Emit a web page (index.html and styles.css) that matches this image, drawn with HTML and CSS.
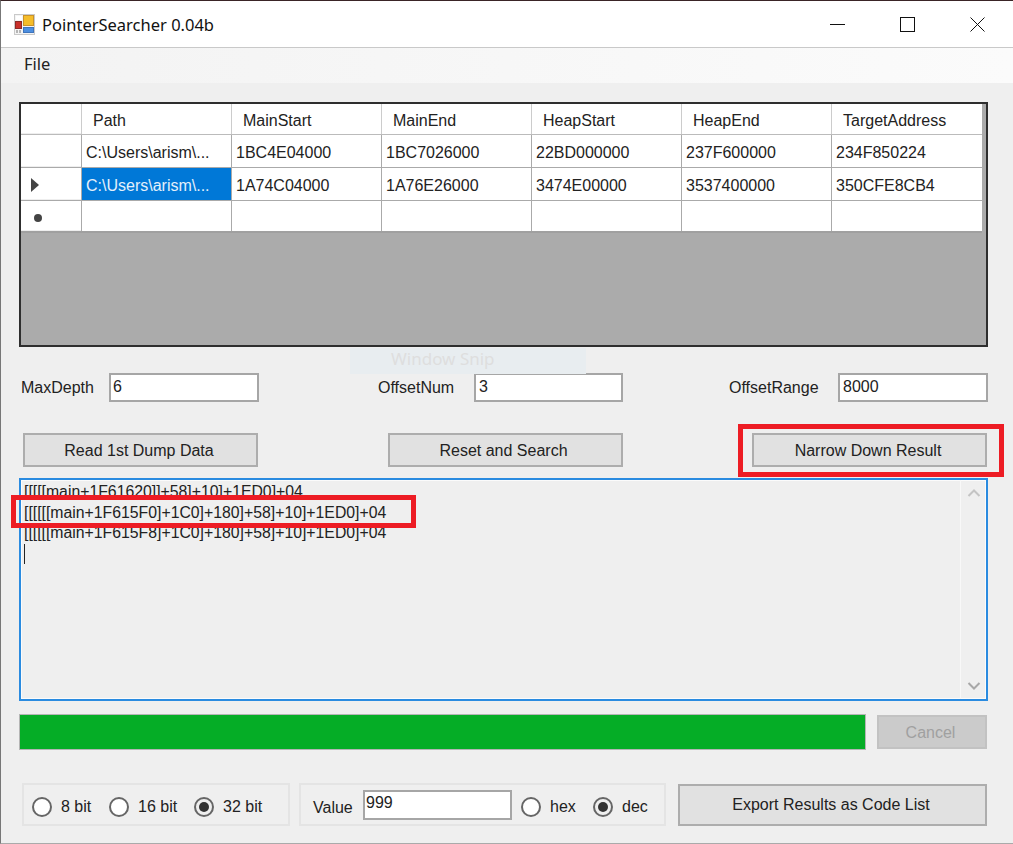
FILE: index.html
```html
<!DOCTYPE html>
<html lang="en">
<head>
    <meta charset="UTF-8">
    <title>PointerSearcher 0.04b</title>
    <link rel="stylesheet" href="styles.css">
</head>
<body>
    <div class="window">
        <div class="titlebar">
            <svg class="app-icon" width="21" height="21" viewBox="0 0 21 21">
                <rect x="0" y="0" width="21" height="21" fill="#c9c9c9"/>
                <rect x="1" y="1" width="19" height="19" fill="#f4f4f4"/>
                <rect x="2" y="2" width="6" height="4" fill="#fff"/>
                <rect x="9.5" y="1.5" width="10" height="10" fill="#f5bd2a" stroke="#c9922a"/>
                <rect x="1.5" y="7.5" width="6" height="7" fill="#c9302a" stroke="#8c2a26"/>
                <rect x="9.5" y="13.5" width="10" height="5" fill="#4d8fe0" stroke="#3f74bb"/>
                <rect x="2" y="16" width="2" height="3" fill="#b5b5b5"/>
                <rect x="5" y="16" width="2" height="3" fill="#b5b5b5"/>
            </svg>
            <div class="title">PointerSearcher 0.04b</div>
            <div class="caption-buttons">
                <svg class="caption" width="15" height="15" viewBox="0 0 15 15"><path d="M0 7.5H15" stroke="#111" fill="none"/></svg>
                <svg class="caption" width="15" height="15" viewBox="0 0 15 15"><rect x="0.5" y="0.5" width="14" height="14" stroke="#111" fill="none"/></svg>
                <svg class="caption" width="15" height="15" viewBox="0 0 15 15"><path d="M0.5 0.5L14.5 14.5M14.5 0.5L0.5 14.5" stroke="#111" fill="none"/></svg>
            </div>
        </div>
        <div class="menubar"><span class="menu-item">File</span></div>

        <div class="main">
            <div class="grid">
                <div class="grid-rows">
                    <div class="row row-header">
                        <div class="row-head"></div>
                        <div class="cell head">Path</div>
                        <div class="cell head">MainStart</div>
                        <div class="cell head">MainEnd</div>
                        <div class="cell head">HeapStart</div>
                        <div class="cell head">HeapEnd</div>
                        <div class="cell head">TargetAddress</div>
                    </div>
                    <div class="row">
                        <div class="row-head"></div>
                        <div class="cell">C:\Users\arism\...</div>
                        <div class="cell">1BC4E04000</div>
                        <div class="cell">1BC7026000</div>
                        <div class="cell">22BD000000</div>
                        <div class="cell">237F600000</div>
                        <div class="cell">234F850224</div>
                    </div>
                    <div class="row">
                        <div class="row-head"><span class="arrow"></span></div>
                        <div class="cell selected">C:\Users\arism\...</div>
                        <div class="cell">1A74C04000</div>
                        <div class="cell">1A76E26000</div>
                        <div class="cell">3474E00000</div>
                        <div class="cell">3537400000</div>
                        <div class="cell">350CFE8CB4</div>
                    </div>
                    <div class="row row-new">
                        <div class="row-head"><span class="star"></span></div>
                        <div class="cell"></div>
                        <div class="cell"></div>
                        <div class="cell"></div>
                        <div class="cell"></div>
                        <div class="cell"></div>
                        <div class="cell"></div>
                    </div>
                </div>
            </div>

            <div class="params">
                <div class="field field-depth"><label>MaxDepth</label><div class="input">6</div></div>
                <div class="field field-num"><label>OffsetNum</label><div class="input">3</div></div>
                <div class="field field-range"><label>OffsetRange</label><div class="input">8000</div></div>
            </div>

            <div class="actions">
                <div class="button">Read 1st Dump Data</div>
                <div class="button">Reset and Search</div>
                <div class="button">Narrow Down Result</div>
            </div>

            <div class="results">
                <div class="results-text">
                    <div>[[[[[main+1F61620]]+58]+10]+1ED0]+04</div>
                    <div>[[[[[[main+1F615F0]+1C0]+180]+58]+10]+1ED0]+04</div>
                    <div>[[[[[[main+1F615F8]+1C0]+180]+58]+10]+1ED0]+04</div>
                    <div class="caret"></div>
                </div>
                <div class="scrollbar">
                    <svg width="14" height="8" viewBox="0 0 14 8"><path d="M1.5 7L7 1.5L12.5 7" stroke="#c4c4c4" stroke-width="2" fill="none"/></svg>
                    <svg width="14" height="8" viewBox="0 0 14 8"><path d="M1.5 1L7 6.5L12.5 1" stroke="#a8a8a8" stroke-width="2" fill="none"/></svg>
                </div>
            </div>

            <div class="progress-row">
                <div class="progress"></div>
                <div class="button button-disabled">Cancel</div>
            </div>

            <div class="bottom-row">
                <div class="group group-bits">
                    <div class="radio-item item-8"><span class="radio"></span>8 bit</div>
                    <div class="radio-item item-16"><span class="radio"></span>16 bit</div>
                    <div class="radio-item"><span class="radio checked"></span>32 bit</div>
                </div>
                <div class="group group-value">
                    <label>Value</label>
                    <div class="input input-value">999</div>
                    <div class="radio-item item-hex"><span class="radio"></span>hex</div>
                    <div class="radio-item"><span class="radio checked"></span>dec</div>
                </div>
                <div class="button button-export">Export Results as Code List</div>
            </div>
        </div>

        <div class="snip-ghost">Window Snip</div>
        <div class="mark mark-button"></div>
        <div class="mark mark-line"></div>
    </div>
</body>
</html>
```

FILE: styles.css
```css
html, body {
    margin: 0;
    height: 100%;
}
body {
    font-family: "Liberation Sans", Arial, sans-serif;
    font-size: 16px;
    color: #222;
    background-color: #efefef;
    overflow: hidden;
}
.window {
    position: relative;
    width: 1013px;
    height: 844px;
    box-sizing: border-box;
    border-top: 1px solid #3a2426;
    border-left: 1px solid #777;
    border-bottom: 1px solid #aaa;
    background-color: #efefef;
}

/* title bar and menu */
.titlebar {
    display: flex;
    align-items: center;
    height: 46px;
    padding-left: 13px;
    background-color: #fff;
    border-bottom: 1px solid #c9c9c9;
}
.app-icon {
    margin-right: 7px;
}
.title {
    font-family: "Noto Sans", sans-serif;
    font-size: 16.5px;
    color: #111;
}
.caption-buttons {
    display: flex;
    margin-left: auto;
    margin-right: 28px;
    gap: 55px;
}
.menubar {
    display: flex;
    align-items: center;
    box-sizing: border-box;
    height: 35px;
    padding: 0 0 4px 23px;
    background: linear-gradient(to right, #f3f3f3, #fbfbfb);
}
.menu-item {
    font-family: "Noto Sans", sans-serif;
    font-size: 16.5px;
    color: #222;
}

/* main form */
.main {
    padding: 19px 0 0 18px;
    width: 969px;
}
.grid {
    box-sizing: border-box;
    height: 245px;
    border: 2px solid #2e2e2e;
    background-color: #ababab;
}
.grid-rows {
    width: 961px;
}
.row {
    display: grid;
    grid-template-columns: 60px repeat(6, 150px);
    height: 33px;
    background-color: #fff;
    border-bottom: 1px solid #aaa;
    box-sizing: border-box;
}
.row-header {
    height: 31px;
    border-bottom: 1px solid #bbb;
}
.row-new {
    height: 32px;
    border-bottom: 2px solid #a0a0a0;
}
.row-head {
    display: flex;
    align-items: center;
    background-color: #fff;
    border-bottom: 1px solid #eee;
}
.cell {
    box-sizing: border-box;
    display: flex;
    align-items: center;
    padding: 3px 0 0 4px;
    border-left: 1px solid #aaa;
    white-space: nowrap;
    overflow: hidden;
}
.head {
    padding-left: 11px;
    border-left-color: #ccc;
}
.selected {
    background-color: #0078d7;
    color: #e4f0fb;
}
.arrow {
    width: 0;
    height: 0;
    margin: 2px 0 0 10px;
    border-left: 8px solid #444;
    border-top: 7px solid transparent;
    border-bottom: 7px solid transparent;
}
.star {
    width: 8px;
    height: 8px;
    margin: 4px 0 0 13px;
    border-radius: 50%;
    background-color: #444;
}

.params {
    display: flex;
    margin-top: 26px;
    padding-left: 2px;
}
.field {
    display: flex;
    align-items: center;
}
.field-depth label {
    width: 88px;
}
.field-num {
    margin-left: 119px;
}
.field-num label {
    width: 96px;
}
.field-num .input {
    width: 149px;
}
.field-range {
    margin-left: 106px;
}
.field-range label {
    width: 109px;
}
.input {
    box-sizing: border-box;
    width: 150px;
    height: 29px;
    padding: 1px 0 0 2px;
    background-color: #fff;
    border: 2px solid #a6a6a6;
    line-height: 22px;
}
.field-num .input,
.field-range .input {
    padding-left: 3px;
}
.actions {
    display: flex;
    justify-content: space-between;
    margin-top: 31px;
    padding: 0 1px 0 4px;
}
.button {
    box-sizing: border-box;
    display: flex;
    align-items: center;
    justify-content: center;
    width: 235px;
    height: 34px;
    padding: 2px 3px 0 0;
    background-color: #e1e1e1;
    border: 2px solid #adadad;
}
.results {
    box-sizing: border-box;
    display: flex;
    height: 223px;
    margin-top: 11px;
    border: 2px solid #2a8be0;
    box-shadow: inset 0 0 0 1px #fbfbfb;
}
.results-text {
    flex: 1;
    padding: 2px 0 0 3px;
    font-size: 15.8px;
    line-height: 20.5px;
}
.caret {
    width: 1px;
    height: 20px;
    background-color: #222;
}
.scrollbar {
    display: flex;
    flex-direction: column;
    align-items: center;
    justify-content: space-between;
    box-sizing: border-box;
    width: 26px;
    padding: 9px 0;
    border-left: 1px solid #f8f8f8;
}
.progress-row {
    display: flex;
    align-items: center;
    justify-content: space-between;
    height: 36px;
    margin-top: 13px;
    padding-right: 1px;
}
.progress {
    box-sizing: border-box;
    width: 847px;
    height: 36px;
    background-color: #05ad26;
    border: 1px solid #b5b5b5;
}
.button-disabled {
    width: 110px;
    background-color: #cbcbcb;
    border-color: #c2c2c2;
    color: #a0a0a0;
}
.bottom-row {
    display: flex;
    height: 43px;
    margin-top: 33px;
    padding-left: 3px;
}
.group {
    box-sizing: border-box;
    display: flex;
    align-items: center;
    padding-top: 4px;
    border: 2px solid #e4e4e4;
}
.group-bits {
    width: 268px;
    padding-left: 8px;
}
.group-value {
    width: 367px;
    margin-left: 9px;
    padding-left: 12px;
}
.group-value label {
    width: 50px;
    padding-top: 2px;
}
.input-value {
    align-self: flex-start;
    width: 149px;
    height: 30px;
    margin: 1px 9px 0 0;
    padding: 0 0 3px 1px;
}
.radio-item {
    display: flex;
    align-items: center;
}
.item-8 {
    width: 77px;
}
.item-16 {
    width: 85px;
}
.item-hex {
    width: 72px;
}
.radio {
    box-sizing: border-box;
    display: flex;
    align-items: center;
    justify-content: center;
    width: 20px;
    height: 20px;
    margin-right: 9px;
    background-color: #fff;
    border: 2px solid #666;
    border-radius: 50%;
}
.radio.checked {
    background-color: transparent;
}
.radio.checked::after {
    content: "";
    width: 10px;
    height: 10px;
    border-radius: 50%;
    background-color: #333;
}
.button-export {
    width: 309px;
    height: 42px;
    margin: 1px 0 0 12px;
    padding-top: 0;
}

/* annotations on top of the screenshot */
.mark {
    position: absolute;
    box-sizing: border-box;
    border: 5px solid #ed1c24;
}
.mark-button {
    left: 737px;
    top: 423px;
    width: 266px;
    height: 53px;
}
.mark-line {
    left: 10px;
    top: 494px;
    width: 405px;
    height: 33px;
}
.snip-ghost {
    position: absolute;
    box-sizing: border-box;
    left: 349px;
    top: 347px;
    width: 236px;
    height: 26px;
    padding-left: 41px;
    line-height: 22px;
    font-family: "Noto Sans", sans-serif;
    font-size: 17px;
    background-color: #e8edf0;
    color: #dedede;
}
```
